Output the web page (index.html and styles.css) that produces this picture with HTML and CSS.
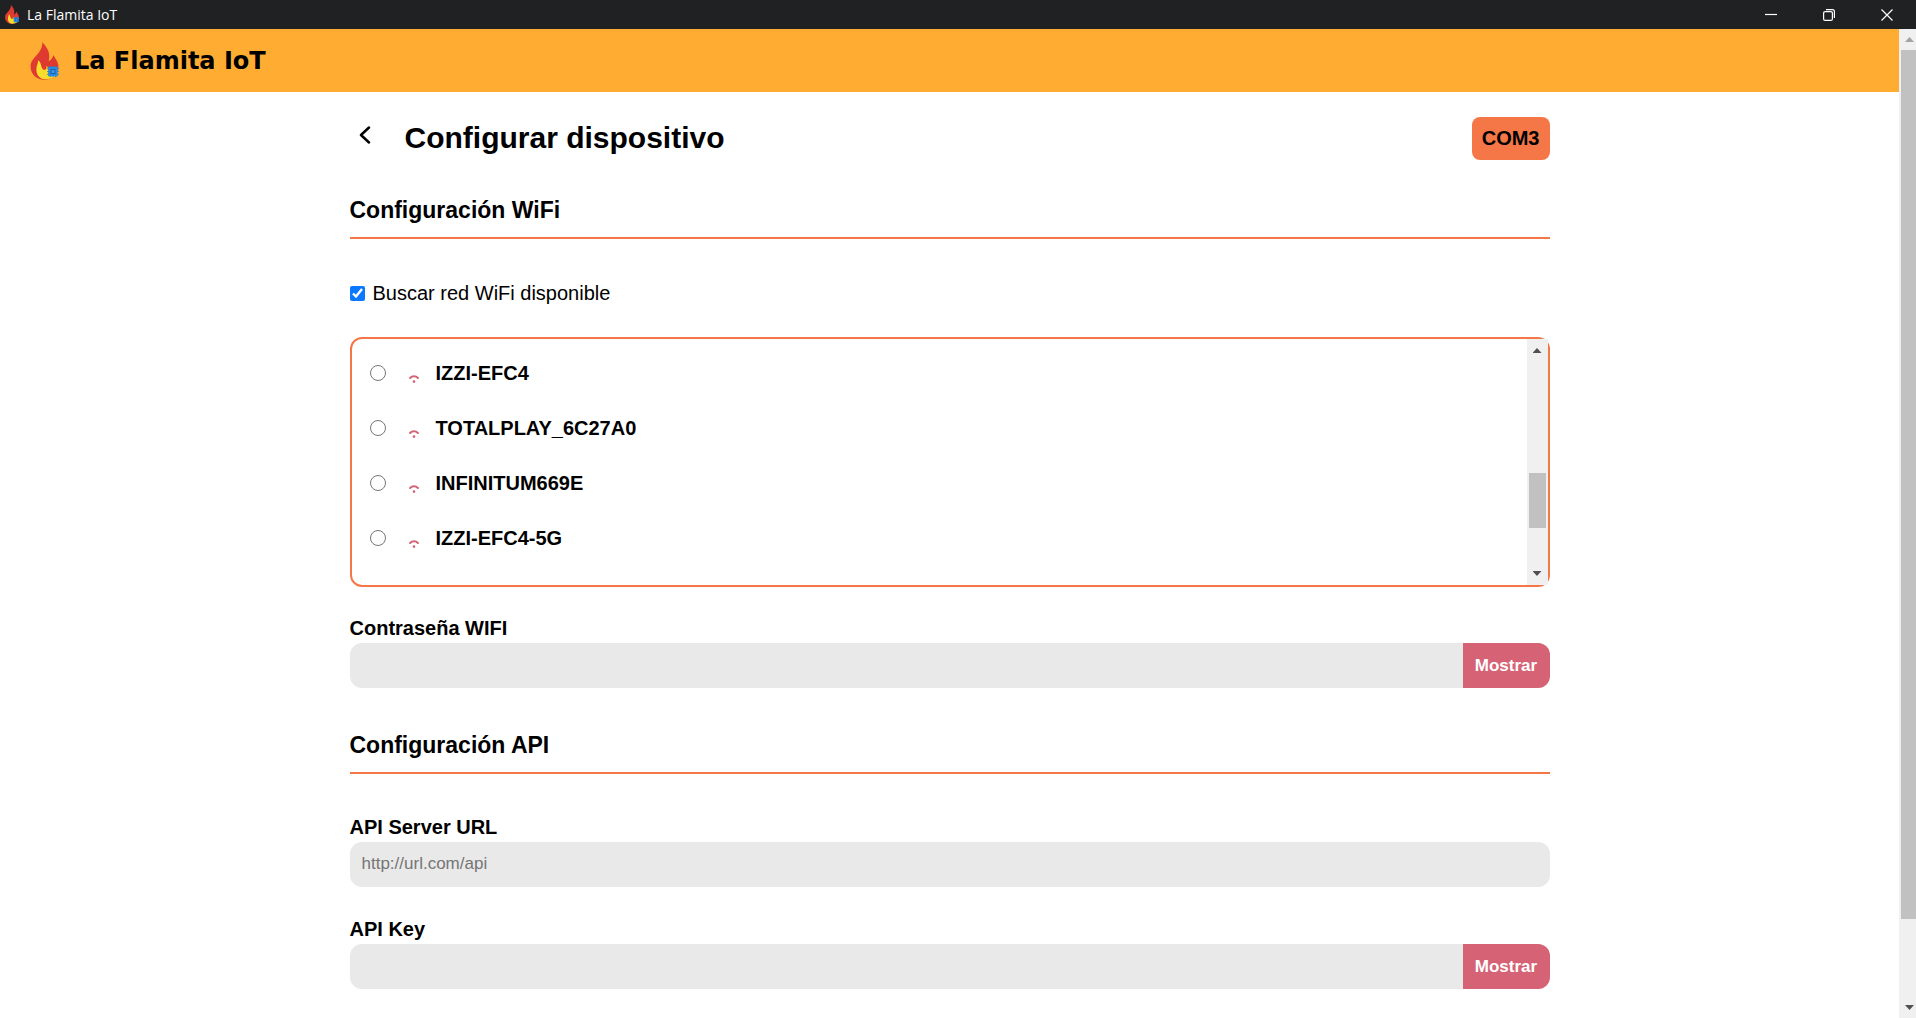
FILE: index.html
```html
<!DOCTYPE html>
<html lang="es">
<head>
<meta charset="utf-8">
<title>La Flamita IoT</title>
<link rel="stylesheet" href="styles.css">
</head>
<body>
<svg class="defs" aria-hidden="true">
  <symbol id="flame" viewBox="0 0 84 112">
    <path fill="#df3a30" d="M36 0C42 9 56 22 56 42C56 49 54 54 55 56C62 53 66 45 69 38C72 48 83 55 83 73C83 97 64 111 42 111C18 111 1 95 1 72C1 44 35 38 36 0Z"/>
    <path fill="#f9dc2c" d="M23 54C30 58 31 66 33 72C35 81 41 84 45 81C49 78 48 74 47 70C53 74 54 80 54 86V100H74C66 107 54 110 42 110C28 109 18 97 18 81C18 69 24 63 23 54Z"/>
    <path stroke="#2478c4" stroke-width="3" d="M50 79H84M50 87H84M50 95H84M59 71V103M67 71V103M75 71V103"/>
    <rect x="53" y="73" width="28" height="28" fill="#2b8be4"/>
    <rect x="61" y="81" width="12" height="12" fill="#3b96ea" stroke="#1c63a8" stroke-width="3"/>
  </symbol>
  <symbol id="wifi-weak" viewBox="0 0 10 8">
    <path fill="none" stroke="#d66275" stroke-width="2" stroke-linecap="round" d="M1.1 3C3.3.7 6.7.7 8.9 3"/>
    <circle cx="5" cy="6.6" r="1.3" fill="#d66275"/>
  </symbol>
</svg>

<div class="window">
  <div class="titlebar">
    <svg class="titlebar-icon" aria-hidden="true"><use href="#flame"/></svg>
    <span class="titlebar-text">La Flamita IoT</span>
    <button class="window-button" aria-label="Minimizar"><svg width="12" height="12"><path d="M0 5.5H12"/></svg></button>
    <button class="window-button" aria-label="Restaurar"><svg width="12" height="12"><rect x=".6" y="2.6" width="8.8" height="8.8" rx="1.5"/><path d="M3 .6H9.5Q11.4.6 11.4 2.5V9"/></svg></button>
    <button class="window-button" aria-label="Cerrar"><svg width="12" height="12"><path d="M.5.5L11.5 11.5M11.5.5L.5 11.5"/></svg></button>
  </div>

  <div class="viewport">
    <div class="page">
      <header class="brand">
        <svg class="brand-logo" aria-hidden="true"><use href="#flame"/></svg>
        <span class="brand-name">La Flamita IoT</span>
      </header>

      <main class="content">
        <div class="page-heading">
          <button class="back" aria-label="Volver"><svg width="12" height="18"><path d="M10 1.5L2 9L10 16.5"/></svg></button>
          <h1>Configurar dispositivo</h1>
          <button class="port">COM3</button>
        </div>

        <form>
          <section>
            <h2>Configuración WiFi</h2>
            <label class="search-toggle"><input type="checkbox" checked>Buscar red WiFi disponible</label>

            <div class="networks">
              <div class="network-list">
                <label class="network"><input type="radio" name="network"><svg class="signal" aria-hidden="true"><use href="#wifi-weak"/></svg>IZZI-EFC4</label>
                <label class="network"><input type="radio" name="network"><svg class="signal" aria-hidden="true"><use href="#wifi-weak"/></svg>TOTALPLAY_6C27A0</label>
                <label class="network"><input type="radio" name="network"><svg class="signal" aria-hidden="true"><use href="#wifi-weak"/></svg>INFINITUM669E</label>
                <label class="network"><input type="radio" name="network"><svg class="signal" aria-hidden="true"><use href="#wifi-weak"/></svg>IZZI-EFC4-5G</label>
              </div>
              <div class="scrollbar list-scrollbar" aria-hidden="true">
                <span class="arrow up"></span>
                <span class="track-before"></span><span class="thumb"></span><span class="track-after"></span>
                <span class="arrow down"></span>
              </div>
            </div>

            <div class="field">
              <label for="wifi-password">Contraseña WIFI</label>
              <div class="control"><input id="wifi-password" type="password"><button type="button" class="reveal">Mostrar</button></div>
            </div>
          </section>

          <section>
            <h2>Configuración API</h2>
            <div class="field">
              <label for="api-url">API Server URL</label>
              <div class="control"><input id="api-url" type="text" placeholder="http://url.com/api"></div>
            </div>
            <div class="field">
              <label for="api-key">API Key</label>
              <div class="control"><input id="api-key" type="password"><button type="button" class="reveal">Mostrar</button></div>
            </div>
          </section>
        </form>
      </main>
    </div>

    <div class="scrollbar page-scrollbar" aria-hidden="true">
      <span class="arrow up"></span>
      <span class="thumb"></span><span class="track-after"></span>
      <span class="arrow down"></span>
    </div>
  </div>
</div>
</body>
</html>
```

FILE: styles.css
```css
:root {
  --orange: #f57747;
  --amber: #ffac33;
  --rose: #d66275;
  --field: #e9e9e9;
}

* {
  box-sizing: border-box;
}

body {
  margin: 0;
  overflow: hidden;
  background: #fff;
  color: #000;
  font: 20px/24px "Liberation Sans", Arial, sans-serif;
}

button,
input {
  margin: 0;
  border: 0;
  font: inherit;
}

.defs {
  display: none;
}

.window {
  display: flex;
  flex-direction: column;
  height: 100vh;
}

/* Title bar */
.titlebar {
  display: flex;
  flex: none;
  align-items: center;
  height: 29px;
  padding-left: 4px;
  background: #202123;
  color: #fff;
}

.titlebar-icon {
  width: 16px;
  height: 19px;
}

.titlebar-text {
  flex: 1;
  padding-left: 7px;
  font: 14px/20px "Open Sans", sans-serif;
}

.window-button {
  display: flex;
  align-items: center;
  justify-content: center;
  width: 58px;
  height: 29px;
  padding: 0;
  background: none;
}

.window-button svg {
  fill: none;
  stroke: #fff;
  stroke-width: 1.2;
}

.viewport {
  display: flex;
  flex: 1;
  min-height: 0;
}

.page {
  flex: 1;
  overflow: hidden;
}

.brand {
  display: flex;
  align-items: center;
  gap: 15px;
  height: 63px;
  padding-left: 30px;
  background: var(--amber);
}

.brand-logo {
  width: 29px;
  height: 38px;
}

.brand-name {
  font: 900 24px/32px "DejaVu Sans", "Arial Black", sans-serif;
}

.content {
  max-width: 1200px;
  margin: 0 auto;
  padding-top: 25px;
}

/* Page heading */
.page-heading {
  display: flex;
  align-items: center;
  height: 43px;
}

.back {
  display: flex;
  width: 55px;
  padding: 0 0 8px 9px;
  background: none;
}

.back svg {
  fill: none;
  stroke: #000;
  stroke-width: 2.5;
  stroke-linecap: round;
  stroke-linejoin: round;
}

h1 {
  flex: 1;
  margin: 0;
  padding-bottom: 2px;
  font-size: 30px;
  line-height: 36px;
}

.port {
  height: 43px;
  padding: 0 10px 2px;
  border-radius: 8px;
  background: var(--orange);
  color: #000;
  font-weight: bold;
}

h2 {
  margin: 36px 0 41px;
  padding-bottom: 13px;
  border-bottom: 2px solid var(--orange);
  font-size: 23px;
  line-height: 28px;
}

section + section h2 {
  margin-top: 43px;
}

.search-toggle {
  display: flex;
  align-items: center;
  gap: 8px;
  height: 26px;
  margin: 0 0 31px;
}

.search-toggle input {
  width: 15px;
  height: 15px;
  accent-color: #0a78ff;
}

/* Networks */
.networks {
  display: flex;
  height: 250px;
  margin-bottom: 29px;
  border: 2px solid var(--orange);
  border-radius: 12px;
}

.network-list {
  flex: 1;
  padding: 6px 0 0 18px;
}

.network {
  display: flex;
  align-items: center;
  height: 55px;
  font-weight: bold;
}

.network input {
  width: 16px;
  height: 16px;
}

.signal {
  width: 10px;
  height: 8px;
  margin: 12px 17px 0 23px;
}

/* Scrollbars */
.scrollbar {
  display: flex;
  flex: none;
  flex-direction: column;
  background: #f0f0f0;
}

.arrow {
  display: flex;
  flex: none;
  align-items: center;
  justify-content: center;
  height: 23px;
}

.arrow::before {
  content: "";
  width: 9px;
  height: 5px;
  background: #505050;
}

.up::before {
  clip-path: polygon(50% 0, 100% 100%, 0 100%);
}

.down::before {
  clip-path: polygon(0 0, 100% 0, 50% 100%);
}

.thumb {
  background: #c1c1c1;
}

.list-scrollbar {
  width: 21px;
}

.list-scrollbar .track-before {
  flex: 111;
}

.list-scrollbar .thumb {
  flex: 55;
  margin: 0 2px;
}

.list-scrollbar .track-after {
  flex: 34;
}

.page-scrollbar {
  width: 17px;
}

.page-scrollbar .arrow {
  height: 21px;
  padding-left: 4px;
}

.page-scrollbar .up::before {
  background: #a3a3a3;
}

.page-scrollbar .thumb {
  flex: 869;
  margin-left: 2px;
}

.page-scrollbar .track-after {
  flex: 78;
}

/* Fields */
.field {
  margin-bottom: 30px;
}

.field label {
  display: block;
  padding-bottom: 3px;
  font-weight: bold;
}

.control {
  display: flex;
  height: 45px;
  overflow: hidden;
  border-radius: 12px;
  background: var(--field);
}

.control input {
  flex: 1;
  min-width: 0;
  padding: 0 12px 2px;
  background: none;
  font-size: 17px;
}

.control input::placeholder {
  color: #757575;
}

.reveal {
  width: 87px;
  padding: 0;
  background: var(--rose);
  color: #fff;
  font-size: 17px;
  font-weight: bold;
}
```
